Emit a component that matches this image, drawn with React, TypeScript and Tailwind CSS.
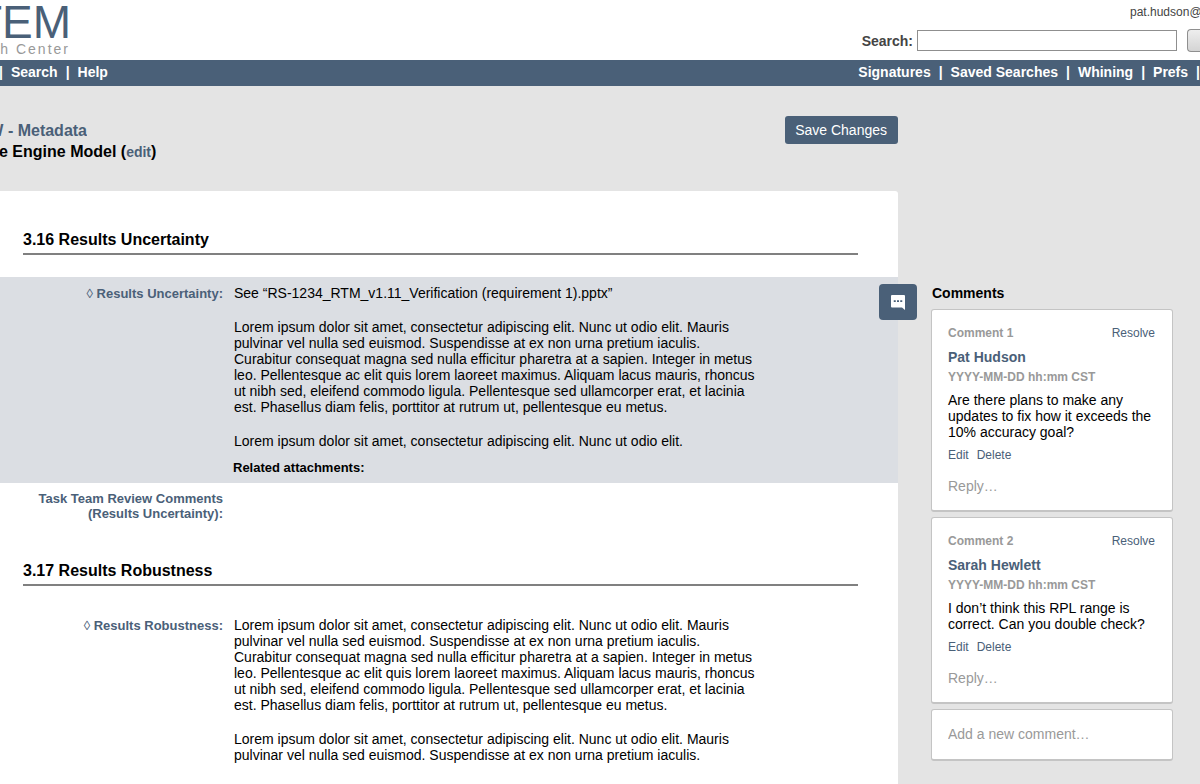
import type { ReactNode } from "react";

const LOREM =
  "Lorem ipsum dolor sit amet, consectetur adipiscing elit. Nunc ut odio elit. Mauris pulvinar vel nulla sed euismod. Suspendisse at ex non urna pretium iaculis. Curabitur consequat magna sed nulla efficitur pharetra at a sapien. Integer in metus leo. Pellentesque ac elit quis lorem laoreet maximus. Aliquam lacus mauris, rhoncus ut nibh sed, eleifend commodo ligula. Pellentesque sed ullamcorper erat, et lacinia est. Phasellus diam felis, porttitor at rutrum ut, pellentesque eu metus.";

const leftLinks = ["Search", "Help"];
const rightLinks = ["Signatures", "Saved Searches", "Whining", "Prefs"];

const comments = [
  {
    title: "Comment 1",
    author: "Pat Hudson",
    text: "Are there plans to make any updates to fix how it exceeds the 10% accuracy goal?",
  },
  {
    title: "Comment 2",
    author: "Sarah Hewlett",
    text: "I don’t think this RPL range is correct. Can you double check?",
  },
];

function Header() {
  return (
    <header className="flex h-[60px] justify-between overflow-hidden bg-white">
      <div className="flex w-[71px] flex-col items-end overflow-hidden whitespace-nowrap">
        <div className="text-[46px] leading-[44px] text-[#4a6078]">TEM</div>
        <div className="pr-px text-sm leading-[10px] tracking-[2px] text-[#999999]">h Center</div>
      </div>
      <div className="flex flex-col items-end">
        <div className="w-[70px] overflow-hidden whitespace-nowrap pt-1 text-xs leading-4 text-[#444444]">
          pat.hudson@
        </div>
        <form className="flex items-center pt-[9px]">
          <label htmlFor="search" className="mr-1 text-sm font-bold text-[#444444]">
            Search:
          </label>
          <input
            id="search"
            type="text"
            className="h-[21px] w-[260px] border border-[#8f8f8f] bg-white px-1 text-sm"
          />
          <button
            type="button"
            aria-label="Search"
            className="ml-[10px] h-[23px] w-[13px] rounded-l-[4px] border border-r-0 border-[#8f8f8f] bg-linear-to-b from-[#eeeeee] to-[#d4d4d4]"
          />
        </form>
      </div>
    </header>
  );
}

function NavBar() {
  return (
    <nav className="flex h-[26px] justify-between overflow-hidden bg-[#4a6078] text-sm leading-[25px] font-bold whitespace-nowrap text-white">
      <div className="-ml-px flex">
        {leftLinks.map((link) => (
          <span key={link} className="flex">
            <span>|</span>
            <a href="#" className="px-2">
              {link}
            </a>
          </span>
        ))}
      </div>
      <div className="flex">
        {rightLinks.map((link) => (
          <span key={link} className="flex">
            <a href="#" className="px-2">
              {link}
            </a>
            <span>|</span>
          </span>
        ))}
      </div>
    </nav>
  );
}

function SectionHeading({ children }: { children: ReactNode }) {
  return (
    <h2 className="mr-10 ml-[23px] border-b-2 border-[#808080] pb-[3px] text-base leading-5 font-bold">
      {children}
    </h2>
  );
}

function Field({ label, children }: { label: ReactNode; children?: ReactNode }) {
  return (
    <div className="flex">
      <div className="w-[223px] shrink-0 pt-[1px] text-right text-[13px] leading-[15px] font-bold text-[#4a6078]">
        {label}
      </div>
      <div className="ml-[11px] w-[524px] text-sm leading-4">{children}</div>
    </div>
  );
}

function Card({ children }: { children: ReactNode }) {
  return (
    <div className="rounded-[3px] border border-b-2 border-[#c4c4c4] bg-white px-4">{children}</div>
  );
}

function CommentCard({ title, author, text }: { title: string; author: string; text: string }) {
  return (
    <Card>
      <div className="flex justify-between pt-[15px] pr-px text-xs leading-4">
        <span className="font-bold text-[#999999]">{title}</span>
        <a href="#" className="text-[#4a6078]">
          Resolve
        </a>
      </div>
      <div className="mt-2 text-sm leading-4 font-bold text-[#4a6078]">{author}</div>
      <div className="mt-1 text-xs leading-4 font-bold text-[#999999]">YYYY-MM-DD hh:mm CST</div>
      <p className="mt-[7px] -mr-1 text-sm leading-4">{text}</p>
      <div className="mt-[7px] flex gap-2 text-xs leading-4 text-[#4a6078]">
        <a href="#">Edit</a>
        <a href="#">Delete</a>
      </div>
      <input
        type="text"
        aria-label={"Reply to " + title}
        placeholder="Reply…"
        className="mt-[15px] mb-4 block h-4 w-full text-sm leading-4 outline-none placeholder:text-[#999999]"
      />
    </Card>
  );
}

export default function App() {
  return (
    <div className="flex h-screen flex-col overflow-hidden bg-[#e4e4e4] font-['Liberation_Sans',Arial,sans-serif] text-black">
      <Header />
      <NavBar />
      <div className="flex min-h-0 flex-1">
        <main className="flex min-w-0 flex-1 flex-col">
          <div className="flex items-start justify-between pt-[30px] pb-[29px]">
            <div className="pt-1">
              <div className="flex w-[87px] justify-end overflow-hidden text-base leading-[21px] font-bold whitespace-nowrap text-[#4a6078]">
                W - Metadata
              </div>
              <h1 className="-ml-px text-base leading-[21px] font-bold">
                e Engine Model (
                <a href="#" className="text-sm text-[#4a6078]">
                  edit
                </a>
                )
              </h1>
            </div>
            <button type="button" className="h-7 rounded-[3px] bg-[#4a6078] pr-[11px] pl-[10px] text-sm text-white">
              Save Changes
            </button>
          </div>
          <div className="flex-1 rounded-tr-[3px] bg-white pt-[39px]">
            <SectionHeading>3.16 Results Uncertainty</SectionHeading>
            <div className="relative mt-[22px] bg-[#dbdee3] pt-2 pb-[7px]">
              <Field
                label={
                  <>
                    <span className="font-normal">◊</span> Results Uncertainty:
                  </>
                }
              >
                <div className="flex flex-col gap-[18px]">
                  <p>See “RS-1234_RTM_v1.11_Verification (requirement 1).pptx”</p>
                  <p>{LOREM}</p>
                  <p>Lorem ipsum dolor sit amet, consectetur adipiscing elit. Nunc ut odio elit.</p>
                </div>
                <h3 className="mt-[11px] -ml-px text-[13px] leading-4 font-bold">Related attachments:</h3>
              </Field>
              <button
                type="button"
                aria-label="Toggle comments"
                className="absolute top-[7px] -right-[19px] flex h-9 w-[38px] items-center justify-center rounded-[4px] bg-[#4a6078]"
              >
                <svg width="14" height="15" viewBox="0 0 14 15">
                  <path
                    d="M1 0h12a1 1 0 0 1 1 1v14l-3-2.500H1a1 1 0 0 1-1-1V1a1 1 0 0 1 1-1z"
                    fill="#ffffff"
                  />
                  <path d="M2.750 5.250h2v1.750h-2zM6 5.250h2v1.750h-2zM9.250 5.250h2v1.750h-2z" fill="#4a6078" />
                </svg>
              </button>
            </div>
            <div className="pt-[7px] pb-10">
              <Field
                label={
                  <>
                    Task Team Review Comments
                    <br />
                    (Results Uncertainty):
                  </>
                }
              />
            </div>
            <SectionHeading>3.17 Results Robustness</SectionHeading>
            <div className="pt-[31px]">
              <Field
                label={
                  <>
                    <span className="font-normal">◊</span> Results Robustness:
                  </>
                }
              >
                <div className="flex flex-col gap-[18px]">
                  <p>{LOREM}</p>
                  <p>
                    Lorem ipsum dolor sit amet, consectetur adipiscing elit. Nunc ut odio elit. Mauris pulvinar vel
                    nulla sed euismod. Suspendisse at ex non urna pretium iaculis.
                  </p>
                </div>
              </Field>
            </div>
          </div>
        </main>
        <aside className="w-[302px] shrink-0 pt-[199px] pr-[27px] pl-[33px]">
          <h2 className="mb-2 pl-px text-sm leading-4 font-bold">Comments</h2>
          <div className="flex flex-col gap-[5px]">
            {comments.map((comment) => (
              <CommentCard key={comment.title} {...comment} />
            ))}
            <Card>
              <input
                type="text"
                aria-label="Add a new comment"
                placeholder="Add a new comment…"
                className="mt-4 mb-[17px] block h-4 w-full text-sm leading-4 outline-none placeholder:text-[#999999]"
              />
            </Card>
          </div>
        </aside>
      </div>
    </div>
  );
}
